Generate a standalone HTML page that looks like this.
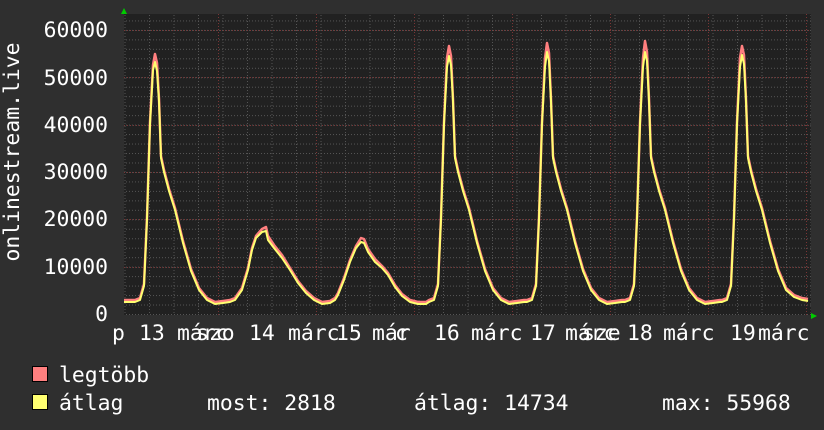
<!DOCTYPE html><html><head><meta charset="utf-8"><style>
body{margin:0;background:#2f2f2f;width:824px;height:430px;overflow:hidden;font-family:"DejaVu Sans Mono","Liberation Mono",monospace;color:#fff}
svg{position:absolute;left:0;top:0}
</style></head><body>
<svg width="824" height="430" xmlns="http://www.w3.org/2000/svg" font-family="DejaVu Sans Mono, Liberation Mono, monospace" font-size="21.4" fill="#fff">
<defs>
<pattern id="mx" x="124.5" y="0" width="24.5" height="430" patternUnits="userSpaceOnUse"><line x1="0.5" y1="0" x2="0.5" y2="430" stroke="#555" stroke-dasharray="1,2"/></pattern>
<pattern id="my" x="0" y="314" width="824" height="9.47" patternUnits="userSpaceOnUse"><line x1="0" y1="0.5" x2="824" y2="0.5" stroke="#555" stroke-dasharray="1,2"/></pattern>
</defs>
<rect x="124" y="14" width="687" height="301" fill="#212121"/>
<rect x="124" y="14" width="687" height="301" fill="url(#mx)"/>
<rect x="124" y="14" width="687" height="301" fill="url(#my)"/>
<g stroke="#7a3535" stroke-dasharray="1,2">
<line x1="124" y1="30.5" x2="811" y2="30.5"/><line x1="124" y1="77.5" x2="811" y2="77.5"/><line x1="124" y1="125.5" x2="811" y2="125.5"/><line x1="124" y1="172.5" x2="811" y2="172.5"/><line x1="124" y1="219.5" x2="811" y2="219.5"/><line x1="124" y1="267.5" x2="811" y2="267.5"/>
<line x1="218.5" y1="14" x2="218.5" y2="315"/><line x1="316.5" y1="14" x2="316.5" y2="315"/><line x1="414.5" y1="14" x2="414.5" y2="315"/><line x1="512.5" y1="14" x2="512.5" y2="315"/><line x1="610.5" y1="14" x2="610.5" y2="315"/><line x1="708.5" y1="14" x2="708.5" y2="315"/><line x1="806.5" y1="14" x2="806.5" y2="315"/>
</g>
<g id="c" fill="none" stroke-linejoin="round">
<polyline transform="translate(0,-2)" stroke="#ff7f7f" stroke-width="2.5" points="124,302 135,302 140,300 144,286 147,219 150,124 153,67 155,56 157,65 159,101 161,158 164,172 169,191 175,210 183,243 191,271 199,290 207,300 215,304 223,303 230,302 235,300 242,290 248,270 252,250 256,238 262,231 266,229 268,238 274,247 282,257 290,270 298,283 306,293 314,300 322,304 330,303 335,300 338,295 344,280 350,262 356,248 361,240 364,241 368,251 375,261 382,268 388,275 395,287 402,296 410,302 418,304 426,304 429,302 434,300 438,286 441,219 444,124 447,60 449,48 451,58 453,101 455,158 458,172 463,191 469,210 477,243 485,271 493,290 501,300 509,304 517,303 524,302 527,302 532,300 536,286 539,219 542,124 545,60 547,45 549,55 551,101 553,158 556,172 561,191 567,210 575,243 583,271 591,290 599,300 607,304 615,303 622,302 625,302 630,300 634,286 637,219 640,124 643,60 645,43 647,54 649,101 651,158 654,172 659,191 665,210 673,243 681,271 689,290 697,300 705,304 713,303 720,302 722,302 727,300 731,286 734,219 737,124 740,60 742,48 744,57 746,101 748,158 751,172 756,191 762,210 770,243 778,271 786,290 794,297 802,300 808,301"/>
<polyline stroke="#ffff70" stroke-width="2" points="124,302 135,302 140,300 144,286 147,219 150,124 153,70 155,62 157,71 159,101 161,158 164,172 169,191 175,210 183,243 191,271 199,290 207,300 215,304 223,303 230,302 235,300 242,290 248,270 252,250 256,238 262,232 266,231 268,240 274,248 282,258 290,270 298,283 306,293 314,300 322,304 330,303 335,300 338,295 344,280 350,262 356,248 361,242 364,243 368,252 375,262 382,268 388,275 395,287 402,296 410,302 418,304 426,304 429,302 434,300 438,286 441,219 444,124 447,67 449,56 451,65 453,101 455,158 458,172 463,191 469,210 477,243 485,271 493,290 501,300 509,304 517,303 524,302 527,302 532,300 536,286 539,219 542,124 545,67 547,52 549,61 551,101 553,158 556,172 561,191 567,210 575,243 583,271 591,290 599,300 607,304 615,303 622,302 625,302 630,300 634,286 637,219 640,124 643,67 645,52 647,61 649,101 651,158 654,172 659,191 665,210 673,243 681,271 689,290 697,300 705,304 713,303 720,302 722,302 727,300 731,286 734,219 737,124 740,67 742,55 744,64 746,101 748,158 751,172 756,191 762,210 770,243 778,271 786,290 794,297 802,300 808,301"/>
</g>
<polygon points="121,14 124,8 127,14" fill="#0c0"/>
<polygon points="811,313 817,316 811,319" fill="#0c0"/>
<g text-anchor="end">
<text x="108" y="37">60000</text><text x="108" y="85">50000</text><text x="108" y="132">40000</text><text x="108" y="179">30000</text><text x="108" y="226">20000</text><text x="108" y="274">10000</text><text x="108" y="321">0</text>
</g>
<text transform="translate(19,152) rotate(-90)" text-anchor="middle">onlinestream.live</text>
<g>
<text x="112" y="340">p</text><text x="139" y="340">13</text><text x="177" y="340">márc</text><text x="196" y="340">szo</text>
<text x="249" y="340">14</text><text x="288" y="340">márc</text><text x="336" y="340">15</text><text x="372" y="340">már</text><text x="395" y="340">c</text>
<text x="434" y="340">16</text><text x="471" y="340">márc</text><text x="530" y="340">17</text><text x="565" y="340">márc</text><text x="582" y="340">sze</text>
<text x="627" y="340">18</text><text x="663" y="340">márc</text><text x="730" y="340">19</text><text x="758" y="340">márc</text>
</g>
<rect x="32.5" y="366.5" width="15" height="15" fill="#ff7f7f" stroke="#000"/>
<rect x="32.5" y="394.5" width="15" height="15" fill="#ffff70" stroke="#000"/>
<text x="59" y="382">legtöbb</text>
<text x="59" y="410">átlag</text>
<text x="207" y="410">most: 2818</text>
<text x="414" y="410">átlag: 14734</text>
<text x="662" y="410">max: 55968</text>
</svg>
</body></html>
